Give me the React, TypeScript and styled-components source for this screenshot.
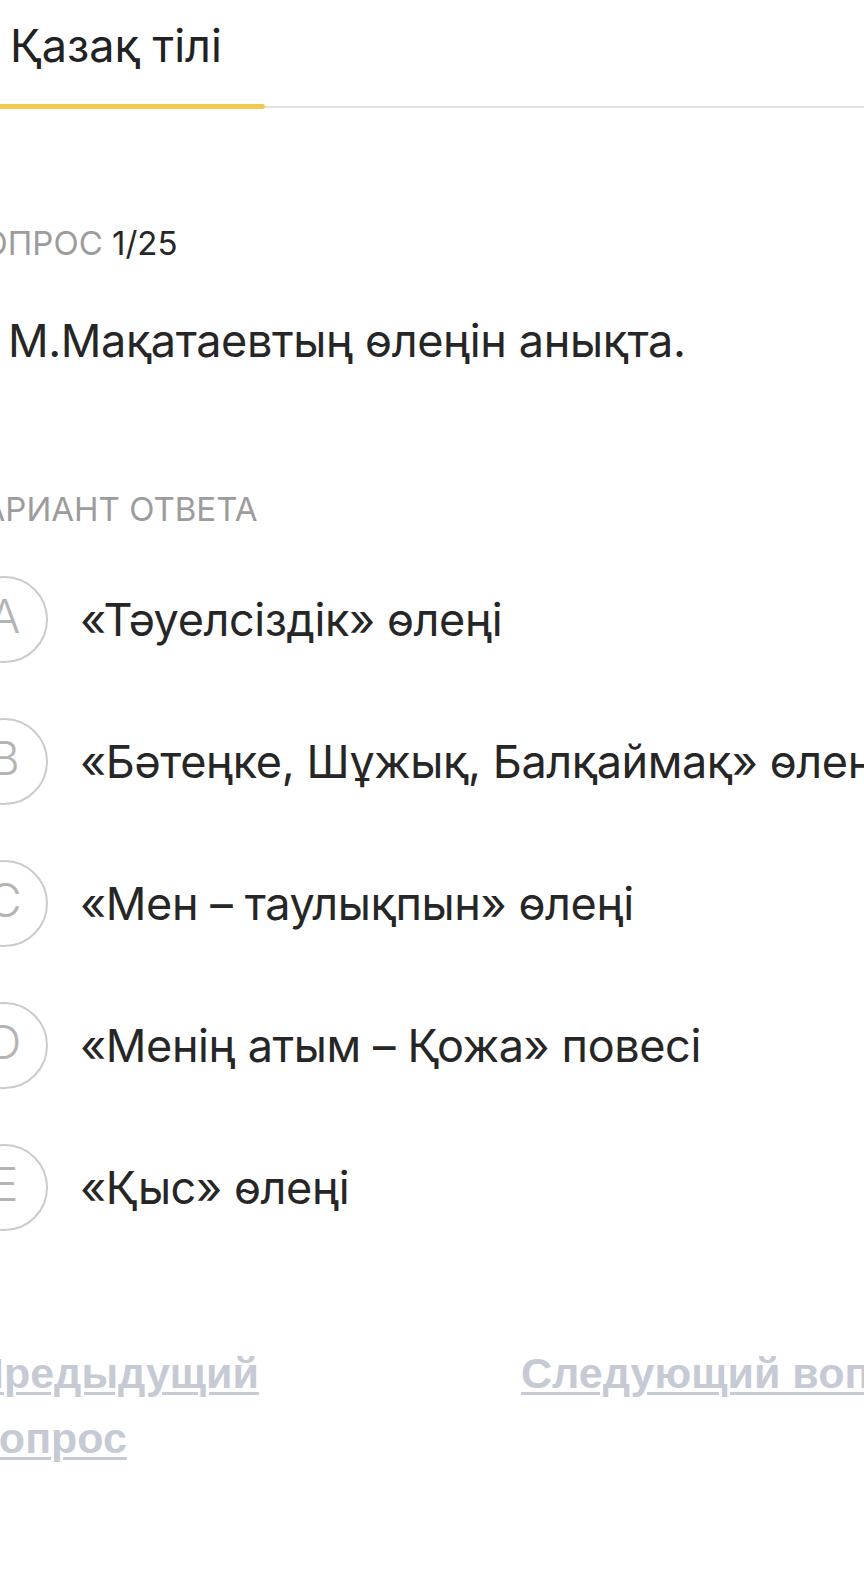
import styled, { createGlobalStyle } from 'styled-components'

const GlobalStyle = createGlobalStyle`
  html, body {
    margin: 0;
    padding: 0;
    background: #ffffff;
    overflow-x: hidden;
  }
  body {
    font-family: Inter, "Noto Sans", "DejaVu Sans", sans-serif;
    color: #262626;
  }
`

const Page = styled.div`
  margin-left: -39px;
  width: calc(100% + 160px);
  padding-bottom: 100px;
`

const Header = styled.h1`
  margin: 0;
  padding: 19px 0 0 49px;
  font-size: 45px;
  line-height: 54px;
  font-weight: 400;
  color: #222;
`

const Track = styled.div`
  display: flex;
  align-items: center;
  height: 5px;
  margin-top: 31px;
  &::after {
    content: '';
    flex: 1;
    height: 2px;
    background: #e2e2e2;
  }
`

const Fill = styled.div<{ $w: number }>`
  width: ${p => p.$w}px;
  height: 5px;
  background: #f1c94f;
  border-radius: 0 3px 3px 0;
`

const Label = styled.div<{ $top: number }>`
  margin-top: ${p => p.$top}px;
  font-size: 33px;
  line-height: 40px;
  color: #9c9c9c;
  text-transform: uppercase;
  span {
    color: #262626;
  }
`

const Question = styled.div`
  margin-top: 51px;
  padding-left: 47px;
  font-size: 45px;
  line-height: 54px;
  letter-spacing: -0.4px;
  color: #262626;
`

const Options = styled.div`
  margin-top: 47px;
  display: flex;
  flex-direction: column;
  gap: 55px;
`

const Option = styled.div`
  display: flex;
  align-items: center;
  gap: 32px;
`

const Circle = styled.div`
  box-sizing: border-box;
  flex: none;
  width: 87px;
  height: 87px;
  border: 2px solid #cbcbcb;
  border-radius: 50%;
  display: flex;
  align-items: center;
  justify-content: center;
  padding-bottom: 9px;
  font-size: 47px;
  line-height: 1;
  font-weight: 300;
  color: #b4b4b4;
`

const OptionText = styled.div`
  font-size: 45px;
  line-height: 54px;
  letter-spacing: -0.4px;
  color: #262626;
  white-space: nowrap;
`

const Nav = styled.div`
  margin-top: 110px;
  padding-left: 12px;
  display: grid;
  grid-template-columns: 300px auto;
  column-gap: 248px;
  align-items: start;
`

const NavLink = styled.a<{ $nowrap?: boolean }>`
  font-family: "Liberation Sans", Arial, sans-serif;
  font-weight: 700;
  font-size: 43px;
  line-height: 65px;
  color: #c5cad4;
  text-decoration: underline;
  text-decoration-thickness: 3px;
  text-underline-offset: 4px;
  white-space: ${p => (p.$nowrap ? 'nowrap' : 'normal')};
`

const options = [
  { key: 'A', text: '«Тәуелсіздік» өлеңі' },
  { key: 'B', text: '«Бәтеңке, Шұжық, Балқаймақ» өлеңі' },
  { key: 'C', text: '«Мен – таулықпын» өлеңі' },
  { key: 'D', text: '«Менің атым – Қожа» повесі' },
  { key: 'E', text: '«Қыс» өлеңі' },
]

export default function App() {
  return (
    <>
      <GlobalStyle />
      <Page>
        <Header>Қазақ тілі</Header>
        <Track>
          <Fill $w={304} />
        </Track>
        <Label $top={114}>
          Вопрос <span>1/25</span>
        </Label>
        <Question>М.Мақатаевтың өлеңін анықта.</Question>
        <Label $top={121}>Вариант ответа</Label>
        <Options>
          {options.map(o => (
            <Option key={o.key}>
              <Circle>{o.key}</Circle>
              <OptionText>{o.text}</OptionText>
            </Option>
          ))}
        </Options>
        <Nav>
          <NavLink>Предыдущий вопрос</NavLink>
          <NavLink $nowrap>Следующий вопрос</NavLink>
        </Nav>
      </Page>
    </>
  )
}
